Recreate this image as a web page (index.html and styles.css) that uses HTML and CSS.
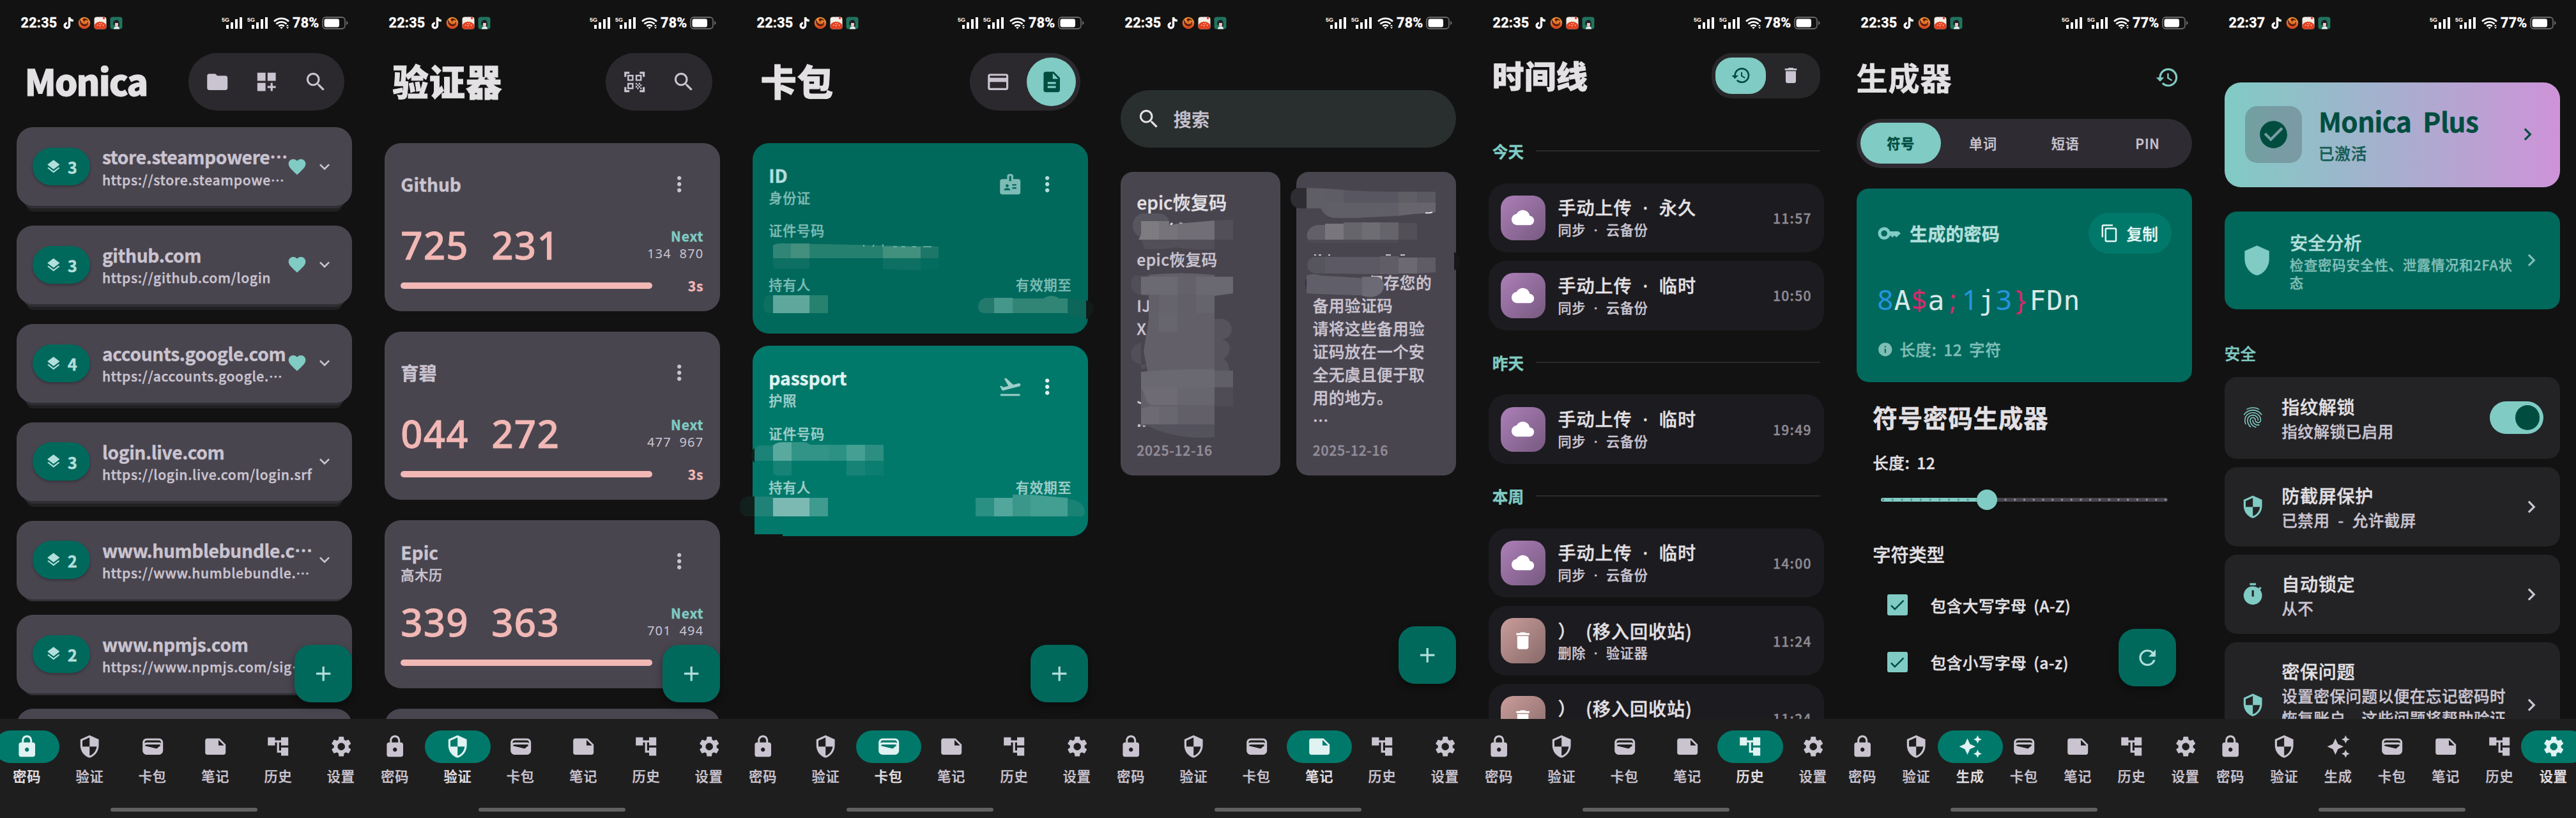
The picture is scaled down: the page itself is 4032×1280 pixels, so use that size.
FILE: index.html
```html
<!DOCTYPE html>
<html lang="zh-CN">
<head>
    <meta charset="UTF-8">
    <title>Monica</title>
    <link rel="stylesheet" href="styles.css">
</head>
<body>
    <svg class="sprite" width="0" height="0">
        <linearGradient id="flame" x1="0" y1="0" x2="0" y2="1"><stop offset="0" stop-color="#f5a03c"/><stop offset="1" stop-color="#c8401c"/></linearGradient>
        <symbol id="folder" viewBox="0 0 24 24"><path d="M10 4H4c-1.1 0-1.99.9-1.99 2L2 18c0 1.1.9 2 2 2h16c1.1 0 2-.9 2-2V8c0-1.1-.9-2-2-2h-8l-2-2z"/></symbol>
        <symbol id="dashboard" viewBox="0 0 24 24"><path d="M3 3h8v8H3zm10 0h8v8h-8zM3 13h8v8H3zm15 0h-2v3h-3v2h3v3h2v-3h3v-2h-3z"/></symbol>
        <symbol id="search" viewBox="0 0 24 24"><path d="M15.5 14h-.79l-.28-.27A6.471 6.471 0 0 0 16 9.5 6.5 6.5 0 1 0 9.5 16c1.61 0 3.09-.59 4.23-1.57l.27.28v.79l5 4.99L20.49 19l-4.99-5zm-6 0C7.01 14 5 11.99 5 9.5S7.01 5 9.5 5 14 7.01 14 9.5 11.99 14 9.5 14z"/></symbol>
        <symbol id="layers" viewBox="0 0 24 24"><path d="M11.99 18.54l-7.37-5.73L3 14.07l9 7 9-7-1.63-1.27-7.38 5.74zM12 16l7.36-5.73L21 9l-9-7-9 7 1.63 1.27L12 16z"/></symbol>
        <symbol id="heart" viewBox="0 0 24 24"><path d="M12 21.35l-1.45-1.32C5.4 15.36 2 12.28 2 8.5 2 5.42 4.42 3 7.5 3c1.74 0 3.41.81 4.5 2.09C13.09 3.81 14.76 3 16.5 3 19.58 3 22 5.42 22 8.5c0 3.78-3.4 6.86-8.55 11.54L12 21.35z"/></symbol>
        <symbol id="down" viewBox="0 0 24 24"><path d="M16.59 8.59L12 13.17 7.41 8.59 6 10l6 6 6-6z"/></symbol>
        <symbol id="right" viewBox="0 0 24 24"><path d="M10 6L8.59 7.41 13.17 12l-4.58 4.59L10 18l6-6z"/></symbol>
        <symbol id="add" viewBox="0 0 24 24"><path d="M19 13h-6v6h-2v-6H5v-2h6V5h2v6h6v2z"/></symbol>
        <symbol id="more" viewBox="0 0 24 24"><path d="M12 8c1.1 0 2-.9 2-2s-.9-2-2-2-2 .9-2 2 .9 2 2 2zm0 2c-1.1 0-2 .9-2 2s.9 2 2 2 2-.9 2-2-.9-2-2-2zm0 6c-1.1 0-2 .9-2 2s.9 2 2 2 2-.9 2-2-.9-2-2-2z"/></symbol>
        <symbol id="lock" viewBox="0 0 24 24"><path d="M18 8h-1V6c0-2.76-2.24-5-5-5S7 3.24 7 6v2H6c-1.1 0-2 .9-2 2v10c0 1.1.9 2 2 2h12c1.1 0 2-.9 2-2V10c0-1.1-.9-2-2-2zm-6 9c-1.1 0-2-.9-2-2s.9-2 2-2 2 .9 2 2-.9 2-2 2zm3.1-9H8.9V6c0-1.71 1.39-3.1 3.1-3.1 1.71 0 3.1 1.39 3.1 3.1v2z"/></symbol>
        <symbol id="security" viewBox="0 0 24 24"><path d="M12 1L3 5v6c0 5.55 3.84 10.74 9 12 5.16-1.26 9-6.45 9-12V5l-9-4zm0 10.99h7c-.53 4.12-3.28 7.79-7 8.94V12H5V6.3l7-3.11v8.8z"/></symbol>
        <symbol id="shield" viewBox="0 0 24 24"><path d="M12 1L3 5v6c0 5.55 3.84 10.74 9 12 5.16-1.26 9-6.45 9-12V5l-9-4z"/></symbol>
        <symbol id="wallet" viewBox="0 0 24 24"><path d="M18 4H6C3.79 4 2 5.79 2 8v8c0 2.21 1.79 4 4 4h12c2.21 0 4-1.79 4-4V8c0-2.21-1.79-4-4-4zm-1.86 9.77c-.24.2-.57.28-.88.2L4.15 11.25C4.45 10.52 5.16 10 6 10h12c.67 0 1.26.34 1.63.84l-3.49 2.93zM6 6h12c1.1 0 2 .9 2 2v.55c-.59-.34-1.27-.55-2-.55H6c-.73 0-1.41.21-2 .55V8c0-1.1.9-2 2-2z"/></symbol>
        <symbol id="note" viewBox="0 0 24 24"><path d="M22 10l-6-6H4c-1.1 0-2 .9-2 2v12.01c0 1.1.9 1.99 2 1.99l16-.01c1.1 0 2-.89 2-1.99v-8zm-7-4.5l5.5 5.5H15V5.5z"/></symbol>
        <symbol id="tree" viewBox="0 0 24 24"><path d="M22 11V3h-7v3H9V3H2v8h7V8h2v10h4v3h7v-8h-7v3h-2V8h2v3z"/></symbol>
        <symbol id="settings" viewBox="0 0 24 24"><path d="M19.14 12.94c.04-.3.06-.61.06-.94 0-.32-.02-.64-.07-.94l2.03-1.58c.18-.14.23-.41.12-.61l-1.92-3.32c-.12-.22-.37-.29-.59-.22l-2.39.96c-.5-.38-1.03-.7-1.62-.94l-.36-2.54c-.04-.24-.24-.41-.48-.41h-3.84c-.24 0-.43.17-.47.41l-.36 2.54c-.59.24-1.13.57-1.62.94l-2.39-.96c-.22-.08-.47 0-.59.22L2.74 8.87c-.12.21-.08.47.12.61l2.03 1.58c-.05.3-.09.63-.09.94s.02.64.07.94l-2.03 1.58c-.18.14-.23.41-.12.61l1.92 3.32c.12.22.37.29.59.22l2.39-.96c.5.38 1.03.7 1.62.94l.36 2.54c.05.24.24.41.48.41h3.84c.24 0 .44-.17.47-.41l.36-2.54c.59-.24 1.13-.56 1.62-.94l2.39.96c.22.08.47 0 .59-.22l1.92-3.32c.12-.22.07-.47-.12-.61l-2.01-1.58zM12 15.6c-1.98 0-3.6-1.62-3.6-3.6s1.62-3.6 3.6-3.6 3.6 1.62 3.6 3.6-1.62 3.6-3.6 3.6z"/></symbol>
        <symbol id="sparkle" viewBox="0 0 24 24"><path d="M19 9l1.25-2.75L23 5l-2.75-1.25L19 1l-1.25 2.75L15 5l2.75 1.25L19 9zm-7.5.5L9 4 6.5 9.5 1 12l5.5 2.5L9 20l2.5-5.5L17 12l-5.5-2.5zM19 15l-1.25 2.75L15 19l2.75 1.25L19 23l1.25-2.75L23 19l-2.75-1.25L19 15z"/></symbol>
        <symbol id="scan" viewBox="0 0 24 24"><path d="M9.5 6.5v3h-3v-3h3M11 5H5v6h6V5zm-1.5 9.5v3h-3v-3h3M11 13H5v6h6v-6zm6.5-6.5v3h-3v-3h3M19 5h-6v6h6V5zm-6 8h1.5v1.5H13V13zm1.5 1.5H16V16h-1.5v-1.5zM16 13h1.5v1.5H16V13zm-3 3h1.5v1.5H13V16zm1.5 1.5H16V19h-1.5v-1.5zM16 16h1.5v1.5H16V16zm1.5-1.5H19V16h-1.5v-1.5zm0 3H19V19h-1.5v-1.5zM22 7h-2V4h-3V2h5v5zm0 15v-5h-2v3h-3v2h5zM2 22h5v-2H4v-3H2v5zM2 2v5h2V4h3V2H2z"/></symbol>
        <symbol id="card" viewBox="0 0 24 24"><path d="M20 4H4c-1.11 0-1.99.89-1.99 2L2 18c0 1.11.89 2 2 2h16c1.11 0 2-.89 2-2V6c0-1.11-.89-2-2-2zm0 14H4v-6h16v6zm0-10H4V6h16v2z"/></symbol>
        <symbol id="doc" viewBox="0 0 24 24"><path d="M14 2H6c-1.1 0-1.99.9-1.99 2L4 20c0 1.1.89 2 1.99 2H18c1.1 0 2-.9 2-2V8l-6-6zm2 16H8v-2h8v2zm0-4H8v-2h8v2zm-3-5V3.5L18.5 9H13z"/></symbol>
        <symbol id="badge" viewBox="0 0 24 24"><path d="M20 7h-5V4c0-1.1-.9-2-2-2h-2c-1.1 0-2 .9-2 2v3H4c-1.1 0-2 .9-2 2v11c0 1.1.9 2 2 2h16c1.1 0 2-.9 2-2V9c0-1.1-.9-2-2-2zM9 12c.83 0 1.5.67 1.5 1.5S9.83 15 9 15s-1.5-.67-1.5-1.5S8.17 12 9 12zm3 6H6v-.75c0-1 2-1.5 3-1.5s3 .5 3 1.5V18zm1-9h-2V4h2v5zm5 7.5h-4V15h4v1.5zm0-3h-4V12h4v1.5z"/></symbol>
        <symbol id="plane" viewBox="0 0 24 24"><path d="M2.5 19h19v2h-19zm19.57-9.36c-.21-.8-1.04-1.28-1.84-1.06L14.92 10l-6.9-6.43-1.93.51 4.14 7.17-4.97 1.33-1.97-1.54-1.45.39 1.82 3.16.77 1.33 1.6-.43 5.31-1.42 4.35-1.16L21 11.49c.81-.23 1.28-1.05 1.07-1.85z"/></symbol>
        <symbol id="history" viewBox="0 0 24 24"><path d="M13 3a9 9 0 0 0-9 9H1l3.89 3.89.07.14L9 12H6c0-3.87 3.13-7 7-7s7 3.13 7 7-3.13 7-7 7c-1.93 0-3.68-.79-4.94-2.06l-1.42 1.42A8.954 8.954 0 0 0 13 21a9 9 0 0 0 0-18zm-1 5v5l4.28 2.54.72-1.21-3.5-2.08V8H12z"/></symbol>
        <symbol id="trash" viewBox="0 0 24 24"><path d="M6 19c0 1.1.9 2 2 2h8c1.1 0 2-.9 2-2V7H6v12zM19 4h-3.5l-1-1h-5l-1 1H5v2h14V4z"/></symbol>
        <symbol id="cloud" viewBox="0 0 24 24"><path d="M19.35 10.04C18.67 6.59 15.64 4 12 4 9.11 4 6.6 5.64 5.35 8.04 2.34 8.36 0 10.91 0 14c0 3.31 2.69 6 6 6h13c2.76 0 5-2.24 5-5 0-2.64-2.05-4.78-4.65-4.96z"/></symbol>
        <symbol id="key" viewBox="0 0 24 24"><path d="M21 10h-8.35C11.83 7.67 9.61 6 7 6c-3.31 0-6 2.69-6 6s2.69 6 6 6c2.61 0 4.83-1.67 5.65-4H13l2 2 2-2 2 2 4-4.04L21 10zM7 15c-1.65 0-3-1.35-3-3s1.35-3 3-3 3 1.35 3 3-1.35 3-3 3z"/></symbol>
        <symbol id="copy" viewBox="0 0 24 24"><path d="M16 1H4c-1.1 0-2 .9-2 2v14h2V3h12V1zm3 4H8c-1.1 0-2 .9-2 2v14c0 1.1.9 2 2 2h11c1.1 0 2-.9 2-2V7c0-1.1-.9-2-2-2zm0 16H8V7h11v14z"/></symbol>
        <symbol id="info" viewBox="0 0 24 24"><path d="M12 2C6.48 2 2 6.48 2 12s4.48 10 10 10 10-4.48 10-10S17.52 2 12 2zm1 15h-2v-6h2v6zm0-8h-2V7h2v2z"/></symbol>
        <symbol id="refresh" viewBox="0 0 24 24"><path d="M17.65 6.35A7.958 7.958 0 0 0 12 4a8 8 0 1 0 7.73 10h-2.08A5.99 5.99 0 0 1 12 18c-3.31 0-6-2.69-6-6s2.69-6 6-6c1.66 0 3.14.69 4.22 1.78L13 11h7V4l-2.35 2.35z"/></symbol>
        <symbol id="check" viewBox="0 0 24 24"><path d="M9 16.17L4.83 12l-1.42 1.41L9 19 21 7l-1.41-1.41z"/></symbol>
        <symbol id="check-circle" viewBox="0 0 24 24"><path d="M12 2C6.48 2 2 6.48 2 12s4.48 10 10 10 10-4.48 10-10S17.52 2 12 2zm-2 15l-5-5 1.41-1.41L10 14.17l7.59-7.59L19 8l-9 9z"/></symbol>
        <symbol id="timer" viewBox="0 0 24 24"><path d="M15 1H9v2h6V1zm4.03 6.39l1.42-1.42c-.43-.51-.9-.99-1.41-1.41l-1.42 1.42A8.962 8.962 0 0 0 12 4a9 9 0 1 0 7.03 3.39zM13 14h-2V8h2v6z"/></symbol>
        <symbol id="finger" viewBox="0 0 24 24"><path d="M17.81 4.47c-.08 0-.16-.02-.23-.06C15.66 3.42 14 3 12.01 3c-1.98 0-3.86.47-5.57 1.41-.24.13-.54.04-.68-.2-.13-.24-.04-.55.2-.68C7.82 2.52 9.86 2 12.01 2c2.13 0 3.99.47 6.03 1.52.25.13.34.43.21.67-.09.18-.26.28-.44.28zM3.5 9.72c-.1 0-.2-.03-.29-.09-.23-.16-.28-.47-.12-.7.99-1.4 2.25-2.5 3.75-3.27C9.98 4.04 14 4.03 17.15 5.65c1.5.77 2.76 1.86 3.75 3.25.16.22.11.54-.12.7-.23.16-.54.11-.7-.12-.9-1.26-2.04-2.25-3.39-2.94-2.87-1.47-6.54-1.47-9.4.01-1.36.7-2.5 1.7-3.4 2.96-.08.14-.23.21-.39.21zm6.25 12.07c-.13 0-.26-.05-.35-.15-.87-.87-1.34-1.43-2.01-2.64-.69-1.23-1.05-2.73-1.05-4.34 0-2.97 2.54-5.39 5.66-5.39s5.66 2.42 5.66 5.39c0 .28-.22.5-.5.5s-.5-.22-.5-.5c0-2.42-2.09-4.39-4.66-4.39-2.57 0-4.66 1.97-4.66 4.39 0 1.44.32 2.77.93 3.85.64 1.15 1.08 1.64 1.85 2.42.19.2.19.51 0 .71-.11.1-.24.15-.37.15zm7.17-1.85c-1.19 0-2.24-.3-3.1-.89-1.49-1.01-2.38-2.65-2.38-4.39 0-.28.22-.5.5-.5s.5.22.5.5c0 1.41.72 2.74 1.94 3.56.71.48 1.54.71 2.54.71.24 0 .64-.03 1.04-.1.27-.05.53.13.58.41.05.27-.13.53-.41.58-.57.11-1.07.12-1.21.12zM14.91 22c-.04 0-.09-.01-.13-.02-1.59-.44-2.63-1.03-3.72-2.1-1.4-1.39-2.17-3.24-2.17-5.22 0-1.62 1.38-2.94 3.08-2.94 1.7 0 3.08 1.32 3.08 2.94 0 1.07.93 1.94 2.08 1.94s2.08-.87 2.08-1.94c0-3.77-3.25-6.83-7.25-6.83-2.84 0-5.44 1.58-6.61 4.03-.39.81-.59 1.76-.59 2.8 0 .78.07 2.01.67 3.61.1.26-.03.55-.29.64-.26.1-.55-.04-.64-.29-.49-1.31-.73-2.61-.73-3.96 0-1.2.23-2.29.68-3.24 1.33-2.79 4.28-4.6 7.51-4.6 4.55 0 8.25 3.51 8.25 7.83 0 1.62-1.38 2.94-3.08 2.94s-3.08-1.32-3.08-2.94c0-1.07-.93-1.94-2.08-1.94s-2.08.87-2.08 1.94c0 1.71.66 3.31 1.87 4.51.95.94 1.86 1.46 3.27 1.85.27.07.42.35.35.61-.05.23-.26.38-.47.38z"/></symbol>
        <!-- notification icons in the status bar -->
        <symbol id="apps" viewBox="0 0 94 20">
            <path d="M10.5 1v13a3.7 3.7 0 1 1-3.7-3.7M10.5 1c.4 3.2 2.600 5 6.300 5.200" fill="none" stroke="#fff" stroke-width="3.400"/>
            <circle cx="34" cy="10" r="9.300" fill="url(#flame)"/>
            <path d="M27 4c2 4 3 8 8 8 3 0 4-2 3-4 3 1 2 7-3 7-6 0-9-5-8-11zM32 3c4-1 8 1 8 4-2-2-5-2-6 1-2-1-3-3-2-5z" fill="#5a1d10"/>
            <rect x="49.500" y=".5" width="19" height="19" rx="4" fill="#f3ece6"/>
            <path d="M49.500 15.500c0-10 19-10 19 0a4 4 0 0 1-4 4h-11a4 4 0 0 1-4-4z" fill="#e2401f"/>
            <path d="M63 .5h3v4l-1.500-1-1.500 1z" fill="#d8472c"/>
            <path d="M54 13.500h1.500M57 11h1.500M60 11h1.500M63 13.500h1.500M58 14.500h1.500" stroke="#fbe3c4" stroke-width="1.500"/>
            <rect x="74.500" y=".5" width="19" height="19" rx="4" fill="#23735f"/>
            <path d="M79 12c0-9 10-9 10-1v4h-3v-4h-4c0 3-3 3-3 1z" fill="#1b2330"/>
            <path d="M82 10h5v4l-1 1h-3l-1-1z" fill="#f0c8ac"/>
            <path d="M80 19.500c0-5 9-6 9 0z" fill="#e8ecee"/>
        </symbol>
        <symbol id="signals" viewBox="0 0 106 20">
            <g fill="#fff">
                <path d="M7 13h4v6H7zM14 9h4v10h-4zM21 4h4v15h-4zM28 1h4v18h-4z"/>
                <path d="M47 13h4v6h-4zM54 9h4v10h-4zM61 4h4v15h-4zM68 1h4v18h-4z"/>
                <text x="0" y="7.500" class="net">5G</text>
                <text x="40" y="7.500" class="net">5G</text>
            </g>
            <g fill="none" stroke="#fff" stroke-width="2.700">
                <path d="M82 7.500a16.500 16.500 0 0 1 23 0M85.500 11.500a11.500 11.500 0 0 1 16 0M89.200 15a6.500 6.500 0 0 1 8.600 0"/>
            </g>
            <path d="M90.800 16.500h5.400L93.500 19.500zM101 15l2-2.500 2 2.500zM101 16.500h4l-2 2.500z" fill="#fff"/>
        </symbol>
        <symbol id="battery" viewBox="0 0 41 20">
            <rect x="1" y="1" width="35" height="18" rx="5" fill="none" stroke="#686868" stroke-width="1.800"/>
            <path d="M38 7c3.500.8 3.500 5.200 0 6z" fill="#686868"/>
            <rect x="3.500" y="3.500" width="23.500" height="13" rx="3" fill="#fff"/>
        </symbol>
    </svg>

    <div class="screens">
        <!-- passwords -->
        <section class="screen">
            <div class="status"><span>22:35</span><svg class="apps"><use href="#apps"/></svg><svg class="signals"><use href="#signals"/></svg><span class="pct">78%</span><svg class="battery"><use href="#battery"/></svg></div>
            <header class="top">
                <h1 class="latin">Monica</h1>
                <div class="tools">
                    <span class="tool"><svg class="i"><use href="#folder"/></svg></span>
                    <span class="tool"><svg class="i"><use href="#dashboard"/></svg></span>
                    <span class="tool"><svg class="i"><use href="#search"/></svg></span>
                </div>
            </header>
            <main class="body passwords">
                <div class="entry stack3">
                    <div class="count"><svg class="i16"><use href="#layers"/></svg>3</div>
                    <div class="info"><h3>store.steampowere⋯</h3><p>https://store.steampowe⋯</p></div>
                    <svg class="i20 fav"><use href="#heart"/></svg>
                    <svg class="i20 fold"><use href="#down"/></svg>
                </div>
                <div class="entry stack3">
                    <div class="count"><svg class="i16"><use href="#layers"/></svg>3</div>
                    <div class="info"><h3>github.com</h3><p>https://github.com/login</p></div>
                    <svg class="i20 fav"><use href="#heart"/></svg>
                    <svg class="i20 fold"><use href="#down"/></svg>
                </div>
                <div class="entry stack3">
                    <div class="count"><svg class="i16"><use href="#layers"/></svg>4</div>
                    <div class="info"><h3>accounts.google.com</h3><p>https://accounts.google.⋯</p></div>
                    <svg class="i20 fav"><use href="#heart"/></svg>
                    <svg class="i20 fold"><use href="#down"/></svg>
                </div>
                <div class="entry stack3">
                    <div class="count"><svg class="i16"><use href="#layers"/></svg>3</div>
                    <div class="info"><h3>login.live.com</h3><p>https://login.live.com/login.srf</p></div>
                    <svg class="i20 fold"><use href="#down"/></svg>
                </div>
                <div class="entry stack2">
                    <div class="count"><svg class="i16"><use href="#layers"/></svg>2</div>
                    <div class="info"><h3>www.humblebundle.c⋯</h3><p>https://www.humblebundle.⋯</p></div>
                    <svg class="i20 fold"><use href="#down"/></svg>
                </div>
                <div class="entry stack2">
                    <div class="count"><svg class="i16"><use href="#layers"/></svg>2</div>
                    <div class="info"><h3>www.npmjs.com</h3><p>https://www.npmjs.com/sig⋯</p></div>
                </div>
                <div class="entry"></div>
            </main>
            <div class="fab"><svg class="i"><use href="#add"/></svg></div>
            <nav class="nav">
                <div class="tabs">
                    <div class="tab on"><span><svg class="i"><use href="#lock"/></svg></span>密码</div>
                    <div class="tab"><span><svg class="i"><use href="#security"/></svg></span>验证</div>
                    <div class="tab"><span><svg class="i"><use href="#wallet"/></svg></span>卡包</div>
                    <div class="tab"><span><svg class="i"><use href="#note"/></svg></span>笔记</div>
                    <div class="tab"><span><svg class="i"><use href="#tree"/></svg></span>历史</div>
                    <div class="tab"><span><svg class="i"><use href="#settings"/></svg></span>设置</div>
                </div>
                <div class="handle"></div>
            </nav>
        </section>

        <!-- authenticator -->
        <section class="screen">
            <div class="status"><span>22:35</span><svg class="apps"><use href="#apps"/></svg><svg class="signals"><use href="#signals"/></svg><span class="pct">78%</span><svg class="battery"><use href="#battery"/></svg></div>
            <header class="top">
                <h1>验证器</h1>
                <div class="tools">
                    <span class="tool"><svg class="i"><use href="#scan"/></svg></span>
                    <span class="tool"><svg class="i"><use href="#search"/></svg></span>
                </div>
            </header>
            <main class="body codes">
                <div class="otp">
                    <div class="otp-head"><div><h3>Github</h3></div><span class="tool"><svg class="i"><use href="#more"/></svg></span></div>
                    <div class="otp-code"><b>725 231</b><div class="next"><strong>Next</strong><span>134 870</span></div></div>
                    <div class="otp-time"><i></i><strong>3s</strong></div>
                </div>
                <div class="otp">
                    <div class="otp-head"><div><h3>育碧</h3></div><span class="tool"><svg class="i"><use href="#more"/></svg></span></div>
                    <div class="otp-code"><b>044 272</b><div class="next"><strong>Next</strong><span>477 967</span></div></div>
                    <div class="otp-time"><i></i><strong>3s</strong></div>
                </div>
                <div class="otp">
                    <div class="otp-head"><div><h3>Epic</h3><p>高木历</p></div><span class="tool"><svg class="i"><use href="#more"/></svg></span></div>
                    <div class="otp-code"><b>339 363</b><div class="next"><strong>Next</strong><span>701 494</span></div></div>
                    <div class="otp-time"><i></i></div>
                </div>
                <div class="otp"></div>
            </main>
            <div class="fab"><svg class="i"><use href="#add"/></svg></div>
            <nav class="nav">
                <div class="tabs">
                    <div class="tab"><span><svg class="i"><use href="#lock"/></svg></span>密码</div>
                    <div class="tab on"><span><svg class="i"><use href="#security"/></svg></span>验证</div>
                    <div class="tab"><span><svg class="i"><use href="#wallet"/></svg></span>卡包</div>
                    <div class="tab"><span><svg class="i"><use href="#note"/></svg></span>笔记</div>
                    <div class="tab"><span><svg class="i"><use href="#tree"/></svg></span>历史</div>
                    <div class="tab"><span><svg class="i"><use href="#settings"/></svg></span>设置</div>
                </div>
                <div class="handle"></div>
            </nav>
        </section>

        <!-- card wallet -->
        <section class="screen">
            <div class="status"><span>22:35</span><svg class="apps"><use href="#apps"/></svg><svg class="signals"><use href="#signals"/></svg><span class="pct">78%</span><svg class="battery"><use href="#battery"/></svg></div>
            <header class="top">
                <h1>卡包</h1>
                <div class="tools spaced">
                    <span class="tool"><svg class="i"><use href="#card"/></svg></span>
                    <span class="tool picked"><svg class="i"><use href="#doc"/></svg></span>
                </div>
            </header>
            <main class="body cards">
                <div class="idcard">
                    <div class="id-head"><div><h3>ID</h3><p>身份证</p></div><svg class="i kind"><use href="#badge"/></svg><span class="tool"><svg class="i"><use href="#more"/></svg></span></div>
                    <p class="number">证件号码</p>
                    <div class="id-foot"><p>持有人</p><p>有效期至</p></div>
                </div>
                <div class="idcard passport">
                    <div class="id-head"><div><h3>passport</h3><p>护照</p></div><svg class="i kind"><use href="#plane"/></svg><span class="tool"><svg class="i"><use href="#more"/></svg></span></div>
                    <p class="number">证件号码</p>
                    <div class="id-foot"><p>持有人</p><p>有效期至</p></div>
                </div>
            </main>
            <!-- mosaic strokes over the private fields -->
            <svg class="mosaic" viewBox="0 0 576 1280">
                <path d="M58 384q6-4 20-3l60 1 179 4v18H58z" fill="#25806f"/>
                <path d="M58 384q6-4 20-3h8v23H58z" fill="#318577"/><path d="M86 381h29v23H86z" fill="#43907f"/>
                <path d="M230 386h59v18h-59z" fill="#42917f"/><path d="M289 387h28v17h-28z" fill="#1d7769"/>
                <path d="M58 404h57v16H62q-4-2-4-6zM230 404h59v19l-59-2z" fill="#0e7062"/><path d="M289 404h28v18h-28z" fill="#046c5f"/>
                <path d="M200 386v-3M214 386l2-3M230 386v-4M246 386h6M259 386h6M276 386h6M293 386h13" stroke="#a5d6d0" stroke-width="1.200"/>
                <path d="M58 462H48q-5 8-5 17t7 11h8z" fill="#0c6f62"/><path d="M58 462h57v28H58z" fill="#5fa79c"/><path d="M115 462h29v28h-29z" fill="#27816f"/>
                <path d="M404 466h-14q-11 3-11 14 0 9 9 10h16z" fill="#22796c"/><path d="M404 466h29v24h-29z" fill="#45968b"/><path d="M433 467h48q13-8 25 0h13v23h-86z" fill="#318575"/>
                <path d="M519 467l29 2v30l-29-5z" fill="#0c675a"/><path d="M548 470q12 2 12 12t-12 18z" fill="#121b19"/>
                <path d="M58 697h-22q-7 2-7 8v16h29z" fill="#1b8377"/><path d="M29 701q-5 4-5 12 0 7 5 11z" fill="#11201d"/>
                <path d="M58 697q6-5 14-5h15v29H58z" fill="#5aa99f"/><path d="M87 692h22l8 4h28v25H87z" fill="#329486"/><path d="M145 696h28v25h-28z" fill="#2c9083"/><path d="M173 696h29v25h-29z" fill="#459f93"/><path d="M202 696h29v25h-29z" fill="#2b8e80"/>
                <path d="M58 721h29v23H65q-7-1-7-8zM173 721h29v23h-29z" fill="#178377"/><path d="M202 721h29v23h-29z" fill="#0c7e71"/>
                <path d="M24 777h5v62h-5z" fill="#111312"/><path d="M29 777H17Q6 780 6 793t10 15h13z" fill="#12201d"/>
                <path d="M29 777h29v31H29z" fill="#208277"/><path d="M29 808h44v29H29z" fill="#01786a"/><path d="M24 836h49v4H24z" fill="#121413"/>
                <path d="M58 779h57v29H58z" fill="#7db9b3"/><path d="M115 779h29v29h-29z" fill="#3f9a90"/>
                <path d="M375 779h29v29h-29z" fill="#2a9083"/><path d="M404 779h29v29h-29z" fill="#52a69c"/><path d="M433 774h28v34h-28z" fill="#3a978a"/><path d="M461 774l58 5v29h-58z" fill="#439f92"/><path d="M519 780q27 5 27 20 0 6-4 8h-23z" fill="#198275"/>
            </svg>
            <div class="fab"><svg class="i"><use href="#add"/></svg></div>
            <nav class="nav">
                <div class="tabs">
                    <div class="tab"><span><svg class="i"><use href="#lock"/></svg></span>密码</div>
                    <div class="tab"><span><svg class="i"><use href="#security"/></svg></span>验证</div>
                    <div class="tab on"><span><svg class="i"><use href="#wallet"/></svg></span>卡包</div>
                    <div class="tab"><span><svg class="i"><use href="#note"/></svg></span>笔记</div>
                    <div class="tab"><span><svg class="i"><use href="#tree"/></svg></span>历史</div>
                    <div class="tab"><span><svg class="i"><use href="#settings"/></svg></span>设置</div>
                </div>
                <div class="handle"></div>
            </nav>
        </section>

        <!-- notes -->
        <section class="screen">
            <div class="status"><span>22:35</span><svg class="apps"><use href="#apps"/></svg><svg class="signals"><use href="#signals"/></svg><span class="pct">78%</span><svg class="battery"><use href="#battery"/></svg></div>
            <main class="body notes">
                <div class="searchbar"><svg class="i"><use href="#search"/></svg>搜索</div>
                <div class="notegrid">
                    <div class="note">
                        <h3>epic恢复码</h3>
                        <p>epic恢复码<br><br>IJ<br>X<br><br><br>J<br>..</p>
                        <time>2025-12-16</time>
                    </div>
                    <div class="note">
                        <h3></h3>
                        <p><br><span class="indent">保存您的</span><br>备用验证码<br>请将这些备用验证码放在一个安全无虞且便于取用的地方。<br>⋯</p>
                        <time>2025-12-16</time>
                    </div>
                </div>
            </main>
            <svg class="mosaic" viewBox="0 0 576 1280">
                <path d="M104 352l3-3M118 350h5" stroke="#e6e1e5" stroke-width="3"/>
                <path d="M58 334h30q14 3 14 15v12l-44 10q-13-5-13-18t13-19z" fill="#57555d"/>
                <path d="M58 346h28v29H54l4-8z" fill="#7e7b81"/><path d="M86 346h16v7l13-3v25H86z" fill="#76737a"/><path d="M115 350l58-5v30h-58z" fill="#716e76"/><path d="M173 345l29-1v31h-29z" fill="#524f58"/>
                <path d="M58 375h29v15H64zM87 375h86v15q-35 2-60-3l-26 3z" fill="#524f59"/>
                <path d="M58 431H48q-6 6-6 14 0 12 13 16l15 3v-33z" fill="#514e58"/>
                <path d="M70 430q50-5 103 0v236H58V600l10-20-6-30 8-50z" fill="#625f69"/>
                <path d="M58 433h57v28H58z" fill="#6b6972"/><path d="M144 433h58v26l-29 4-29-2z" fill="#6a6870"/><path d="M115 433h29v28h-29z" fill="#64616b"/>
                <path d="M86 461h29v29H86zM144 461h29v29h-29z" fill="#65636c"/><path d="M86 490h29v29H86z" fill="#67656e"/>
                <path d="M173 499h14q12 4 13 16-1 14-15 16 12 3 12 16-2 12-11 14 10 4 10 20h-23z" fill="#56535d"/>
                <path d="M58 536q-16 5-16 19 0 14 24 16l-2 6h-6z" fill="#524f59"/>
                <path d="M58 582q55-5 115-4v28H58z" fill="#6a6870"/><path d="M173 580h29v26h-29z" fill="#605e67"/>
                <path d="M58 606h57v28H74q-8-3-10-15z" fill="#6e6b74"/><path d="M115 606h58v28h-58z" fill="#67656e"/><path d="M173 606h29v30h-29z" fill="#4f4c56"/>
                <path d="M58 640q8-5 28-4v28H58z" fill="#6d6a73"/><path d="M86 636h29v28H86z" fill="#68666e"/><path d="M115 636h58v28h-58z" fill="#625f69"/>
                <path d="M62 664h111v20q-60 5-105-18z" fill="#54525c"/>
                <path d="M317 294h-14q-11 3-11 16t13 16h12z" fill="#2e2d32"/>
                <path d="M317 294l29 1v31h-29z" fill="#605e65"/><path d="M346 295l29 2v44h-14q-15-1-22-15h7z" fill="#5e5c64"/><path d="M375 297q30 3 86 3v38q-50 2-86 3z" fill="#585660"/>
                <path d="M461 300h29v34l-29 4z" fill="#605e65"/><path d="M490 300h29v32l-29 3z" fill="#5a5860"/><path d="M346 317h115v20q-60 5-100 4-14-3-15-24z" fill="#605e66"/><path d="M461 317h58v15l-58 5z" fill="#67656b"/>
                <path d="M503 333q6 1 11-1" stroke="#e6e1e5" stroke-width="2" fill="none"/>
                <path d="M346 352q-20-2-26 8-5 10 0 15h26z" fill="#635f67"/><path d="M346 350h29v25h-29z" fill="#79767d"/><path d="M375 348h29v27h-29z" fill="#66656b"/><path d="M404 348h28v27h-28z" fill="#6f6d74"/><path d="M432 348h29v27h-29z" fill="#65646a"/><path d="M461 349h29v26h-29z" fill="#534f56"/>
                <path d="M318 375h143v5H330q-10 1-12-5z" fill="#4f4b55"/>
                <path d="M329 399h3M336 399h4M351 399h3M441 399h8M464 399h7" stroke="#cac4d0" stroke-width="2"/>
                <path d="M346 402h-18q-10 3-10 13t12 13h16z" fill="#56545d"/><path d="M346 402h86v27l-86-1z" fill="#5c5964"/><path d="M432 401h29v28h-29z" fill="#605d67"/><path d="M461 403h29v25h-29z" fill="#6c6972"/><path d="M490 403h29v23l-29 2z" fill="#5f5c66"/>
                <path d="M317 434q-4 8 0 18z" fill="#303036"/><path d="M317 431q12-4 22 0l65 4v27q-35 0-87-3z" fill="#605e69"/><path d="M404 433h24q10 3 10 15-2 16-22 17l-12-2z" fill="#6c6a74"/>
                <path d="M548 394q9 5 9 16t-9 13z" fill="#17171a"/>
            </svg>
            <div class="fab raised"><svg class="i"><use href="#add"/></svg></div>
            <nav class="nav">
                <div class="tabs">
                    <div class="tab"><span><svg class="i"><use href="#lock"/></svg></span>密码</div>
                    <div class="tab"><span><svg class="i"><use href="#security"/></svg></span>验证</div>
                    <div class="tab"><span><svg class="i"><use href="#wallet"/></svg></span>卡包</div>
                    <div class="tab on"><span><svg class="i"><use href="#note"/></svg></span>笔记</div>
                    <div class="tab"><span><svg class="i"><use href="#tree"/></svg></span>历史</div>
                    <div class="tab"><span><svg class="i"><use href="#settings"/></svg></span>设置</div>
                </div>
                <div class="handle"></div>
            </nav>
        </section>

        <!-- timeline -->
        <section class="screen">
            <div class="status"><span>22:35</span><svg class="apps"><use href="#apps"/></svg><svg class="signals"><use href="#signals"/></svg><span class="pct">78%</span><svg class="battery"><use href="#battery"/></svg></div>
            <header class="top timeline-top">
                <h1>时间线</h1>
                <div class="switcher"><span class="picked"><svg class="i20"><use href="#history"/></svg></span><span><svg class="i20"><use href="#trash"/></svg></span></div>
            </header>
            <main class="body timeline">
                <h4>今天</h4>
                <div class="event"><div class="tile"><svg><use href="#cloud"/></svg></div><div class="info"><h3>手动上传<s>·</s>永久</h3><p>同步<s>·</s>云备份</p></div><time>11:57</time></div>
                <div class="event"><div class="tile"><svg><use href="#cloud"/></svg></div><div class="info"><h3>手动上传<s>·</s>临时</h3><p>同步<s>·</s>云备份</p></div><time>10:50</time></div>
                <h4>昨天</h4>
                <div class="event"><div class="tile"><svg><use href="#cloud"/></svg></div><div class="info"><h3>手动上传<s>·</s>临时</h3><p>同步<s>·</s>云备份</p></div><time>19:49</time></div>
                <h4>本周</h4>
                <div class="event"><div class="tile"><svg><use href="#cloud"/></svg></div><div class="info"><h3>手动上传<s>·</s>临时</h3><p>同步<s>·</s>云备份</p></div><time>14:00</time></div>
                <div class="event"><div class="tile removed"><svg><use href="#trash"/></svg></div><div class="info"><h3>）&nbsp; (移入回收站)</h3><p>删除<s>·</s>验证器</p></div><time>11:24</time></div>
                <div class="event"><div class="tile removed"><svg><use href="#trash"/></svg></div><div class="info"><h3>）&nbsp; (移入回收站)</h3><p>删除<s>·</s>验证器</p></div><time>11:24</time></div>
            </main>
            <nav class="nav">
                <div class="tabs">
                    <div class="tab"><span><svg class="i"><use href="#lock"/></svg></span>密码</div>
                    <div class="tab"><span><svg class="i"><use href="#security"/></svg></span>验证</div>
                    <div class="tab"><span><svg class="i"><use href="#wallet"/></svg></span>卡包</div>
                    <div class="tab"><span><svg class="i"><use href="#note"/></svg></span>笔记</div>
                    <div class="tab on"><span><svg class="i"><use href="#tree"/></svg></span>历史</div>
                    <div class="tab"><span><svg class="i"><use href="#settings"/></svg></span>设置</div>
                </div>
                <div class="handle"></div>
            </nav>
        </section>

        <!-- generator -->
        <section class="screen">
            <div class="status"><span>22:35</span><svg class="apps"><use href="#apps"/></svg><svg class="signals"><use href="#signals"/></svg><span class="pct">77%</span><svg class="battery"><use href="#battery"/></svg></div>
            <header class="top generator-top">
                <h1>生成器</h1>
                <span class="tool"><svg class="i"><use href="#history"/></svg></span>
            </header>
            <main class="body generator">
                <div class="segments"><span class="picked">符号</span><span>单词</span><span>短语</span><span>PIN</span></div>
                <div class="result">
                    <div class="result-head"><svg class="i"><use href="#key"/></svg><h3>生成的密码</h3><div class="copy"><svg><use href="#copy"/></svg>复制</div></div>
                    <div class="secret"><span class="num">8</span><span>A</span><span class="sym">$</span><span>a</span><span class="sym">;</span><span class="num">1</span><span>j</span><span class="num">3</span><span class="sym">}</span><span>F</span><span>D</span><span>n</span></div>
                    <div class="length"><svg class="i16"><use href="#info"/></svg>长度: 12 字符</div>
                </div>
                <h2>符号密码生成器</h2>
                <p class="label">长度: 12</p>
                <div class="slider"><div class="filled"></div><div class="thumb"></div></div>
                <h3 class="types">字符类型</h3>
                <div class="option"><span><svg><use href="#check"/></svg></span>包含大写字母 (A-Z)</div>
                <div class="option"><span><svg><use href="#check"/></svg></span>包含小写字母 (a-z)</div>
            </main>
            <div class="fab regen"><svg class="i"><use href="#refresh"/></svg></div>
            <nav class="nav">
                <div class="tabs">
                    <div class="tab"><span><svg class="i"><use href="#lock"/></svg></span>密码</div>
                    <div class="tab"><span><svg class="i"><use href="#security"/></svg></span>验证</div>
                    <div class="tab on"><span><svg class="i"><use href="#sparkle"/></svg></span>生成</div>
                    <div class="tab"><span><svg class="i"><use href="#wallet"/></svg></span>卡包</div>
                    <div class="tab"><span><svg class="i"><use href="#note"/></svg></span>笔记</div>
                    <div class="tab"><span><svg class="i"><use href="#tree"/></svg></span>历史</div>
                    <div class="tab"><span><svg class="i"><use href="#settings"/></svg></span>设置</div>
                </div>
                <div class="handle"></div>
            </nav>
        </section>

        <!-- settings -->
        <section class="screen">
            <div class="status"><span>22:37</span><svg class="apps"><use href="#apps"/></svg><svg class="signals"><use href="#signals"/></svg><span class="pct">77%</span><svg class="battery"><use href="#battery"/></svg></div>
            <main class="body prefs">
                <div class="plus">
                    <div class="plus-icon"><svg class="i32"><use href="#check-circle"/></svg></div>
                    <div class="info"><h2>Monica Plus</h2><p>已激活</p></div>
                    <svg class="i"><use href="#right"/></svg>
                </div>
                <div class="analysis">
                    <svg class="i32"><use href="#shield"/></svg>
                    <div class="info"><h3>安全分析</h3><p>检查密码安全性、泄露情况和2FA状态</p></div>
                    <svg class="i"><use href="#right"/></svg>
                </div>
                <h4>安全</h4>
                <div class="pref tall"><svg class="i lead"><use href="#finger"/></svg><div class="info"><h3>指纹解锁</h3><p>指纹解锁已启用</p></div><div class="toggle"><i></i></div></div>
                <div class="pref"><svg class="i lead"><use href="#security"/></svg><div class="info"><h3>防截屏保护</h3><p>已禁用 - 允许截屏</p></div><svg class="i"><use href="#right"/></svg></div>
                <div class="pref"><svg class="i lead"><use href="#timer"/></svg><div class="info"><h3>自动锁定</h3><p>从不</p></div><svg class="i"><use href="#right"/></svg></div>
                <div class="pref"><svg class="i lead"><use href="#security"/></svg><div class="info"><h3>密保问题</h3><p>设置密保问题以便在忘记密码时恢复账户。这些问题将帮助验证您的身份</p></div><svg class="i"><use href="#right"/></svg></div>
            </main>
            <nav class="nav">
                <div class="tabs">
                    <div class="tab"><span><svg class="i"><use href="#lock"/></svg></span>密码</div>
                    <div class="tab"><span><svg class="i"><use href="#security"/></svg></span>验证</div>
                    <div class="tab"><span><svg class="i"><use href="#sparkle"/></svg></span>生成</div>
                    <div class="tab"><span><svg class="i"><use href="#wallet"/></svg></span>卡包</div>
                    <div class="tab"><span><svg class="i"><use href="#note"/></svg></span>笔记</div>
                    <div class="tab"><span><svg class="i"><use href="#tree"/></svg></span>历史</div>
                    <div class="tab on"><span><svg class="i"><use href="#settings"/></svg></span>设置</div>
                </div>
                <div class="handle"></div>
            </nav>
        </section>
    </div>
</body>
</html>
```

FILE: styles.css
```css
* {
    box-sizing: border-box;
    margin: 0;
    padding: 0;
}

body {
    background: #121212;
    color: #e3e0e4;
    font-family: "Noto Sans CJK SC", sans-serif;
    font-weight: 500;
    -webkit-text-stroke: 0.4px;
}

svg {
    display: block;
    flex: none;
    fill: currentColor;
}

.sprite {
    position: absolute;
}

.i { width: 38.4px; height: 38.4px; }
.i16 { width: 25.6px; height: 25.6px; }
.i20 { width: 32px; height: 32px; }
.i32 { width: 51.2px; height: 51.2px; }

.screens {
    display: flex;
    width: 4032px;
    height: 1280px;
    overflow: hidden;
}

.screen {
    position: relative;
    display: flex;
    flex-direction: column;
    width: 576px;
    height: 1280px;
    overflow: hidden;
}

/* status bar */
.status {
    display: flex;
    flex: none;
    align-items: center;
    height: 83px;
    padding: 0 31px 11px 32.5px;
    color: #fff;
    font: 700 21.5px/1 Roboto, sans-serif;
}

.status span { letter-spacing: 0.3px; }
.apps { width: 94px; height: 20px; margin-left: 8.5px; }
.signals { width: 106px; height: 20px; margin-left: auto; }
.net { font: 700 9px "Liberation Sans", sans-serif; }
.pct { margin: 0 4.5px 0 5.5px; }
.battery { width: 41px; height: 20px; }

/* header */
.top {
    display: flex;
    flex: none;
    align-items: center;
    justify-content: space-between;
    height: 90px;
    padding: 0 37.5px 0 38.4px;
}

h1 {
    color: #e3e1e3;
    font-size: 56.3px;
    font-weight: 900;
    line-height: 86px;
    height: 90px;
    letter-spacing: 1px;
    -webkit-text-stroke: 0.9px;
}

h1.latin { letter-spacing: -2px; }

.tools {
    display: flex;
    padding: 6.4px;
    border-radius: 45px;
    background: #2b292e;
    color: #cac4d0;
}

.tools.spaced { gap: 6.4px; }

.tool {
    display: flex;
    flex: none;
    align-items: center;
    justify-content: center;
    width: 76.8px;
    height: 76.8px;
    border-radius: 50%;
}

.picked {
    background: #80cbc4;
    color: #004d40;
}

.body {
    flex: 1;
    min-height: 0;
    overflow: hidden;
    padding: 0 25px 0 25.7px;
}

.info {
    flex: 1;
    min-width: 0;
}

h3 {
    font-size: 28.16px;
    font-weight: 700;
    line-height: 42.2px;
    white-space: nowrap;
}

p {
    font-size: 21.12px;
    line-height: 28.2px;
    letter-spacing: 0.8px;
}

/* passwords */
.passwords { padding-top: 26px; }

.entry {
    display: flex;
    align-items: center;
    height: 123.2px;
    padding: 0 26.6px 0 25px;
    border-radius: 25.6px;
    background: #49454f;
    color: #cac4d0;
}

.stack3 {
    margin-bottom: 30.7px;
    box-shadow: 0 14px 0 -10px #302f35, 0 25px 0 -16px #212123;
}

.stack2 {
    margin-bottom: 24px;
    box-shadow: 0 13px 0 -10px #302f35;
}

.entry .info { padding-bottom: 2px; }
.entry h3 { letter-spacing: -0.35px; }
.entry p { white-space: nowrap; letter-spacing: 0.62px; }

.count {
    display: flex;
    align-items: center;
    justify-content: center;
    gap: 9.6px;
    width: 90px;
    height: 59.5px;
    margin-right: 19.2px;
    border-radius: 30px;
    background: #00695c;
    box-shadow: 0 2px 4px rgba(0, 0, 0, .3);
    color: #b2dfdb;
    font-size: 25.6px;
    font-weight: 700;
}

.fav { color: #80cbc4; margin-right: 11.5px; }

/* authenticator */
.codes { padding-top: 51px; }

.otp {
    height: 262.6px;
    margin-bottom: 32.4px;
    padding: 25.6px;
    border-radius: 25.6px;
    background: #49454f;
    color: #cac4d0;
}

.otp-head, .id-head {
    display: flex;
    align-items: center;
    justify-content: space-between;
    height: 76.8px;
}

.otp-code {
    display: flex;
    align-items: center;
    justify-content: space-between;
    height: 106.5px;
    padding-top: 7px;
    font-family: "Noto Sans", sans-serif;
}

.otp-code b {
    color: #f2b8b5;
    font-size: 60px;
    font-weight: 500;
    line-height: 70px;
    letter-spacing: 1.2px;
    word-spacing: 18.7px;
    -webkit-text-stroke: 0.8px;
}

.next {
    display: flex;
    flex-direction: column;
    align-items: flex-end;
    line-height: 27px;
}

.next strong {
    color: #80cbc4;
    font-family: "Noto Sans CJK SC", sans-serif;
    font-size: 21.12px;
    letter-spacing: 0.9px;
}

.next span {
    font-size: 20px;
    font-weight: 400;
    letter-spacing: 1.2px;
    word-spacing: 6.2px;
    -webkit-text-stroke: 0;
}

.otp-time {
    display: flex;
    align-items: center;
    justify-content: space-between;
    height: 28px;
}

.otp-time i {
    width: 394px;
    height: 9.6px;
    border-radius: 5px;
    background: #f2b8b5;
}

.otp-time strong {
    color: #f2b8b5;
    font-size: 21.12px;
    letter-spacing: 0.9px;
}

/* id cards */
.cards { padding-top: 51px; }

.idcard {
    height: 298px;
    margin-bottom: 19.2px;
    padding: 25.6px;
    border-radius: 25.6px;
    background: #00695c;
    color: #b2dfdb;
}

.passport {
    background: #00796b;
    color: #e0f2f1;
}

.id-head > div { flex: 1; }
.id-head .kind { opacity: .7; }
.idcard p { opacity: .7; }
.number { margin-top: 20px; }

.id-foot {
    display: flex;
    justify-content: space-between;
    margin-top: 56.5px;
}

.mosaic {
    position: absolute;
    top: 0;
    left: 0;
    width: 576px;
    height: 1280px;
}

/* notes */
.notes { padding-top: 58px; }

.searchbar {
    display: flex;
    align-items: center;
    gap: 19.2px;
    height: 89.6px;
    padding-left: 25.6px;
    border-radius: 45px;
    background: #282f2e;
    color: #cac4d0;
    font-size: 28.16px;
}

.searchbar svg { color: #e3e0e4; }

.notegrid {
    display: grid;
    grid-template-columns: 1fr 1fr;
    gap: 25.6px;
    margin-top: 38.5px;
}

.note {
    height: 475.4px;
    padding: 25.6px;
    border-radius: 19.2px;
    background: #49454f;
}

.note h3 {
    height: 92px;
    font-weight: 500;
}

.note p {
    height: 289px;
    color: #cac4d0;
    font-size: 24.64px;
    line-height: 36.1px;
    letter-spacing: 0.44px;
}

.indent { margin-left: 86px; }

.note time {
    display: block;
    margin-top: 14px;
    color: #928d99;
    font-size: 21.12px;
    line-height: 28.2px;
    letter-spacing: 0.7px;
}

/* timeline */
.timeline-top {
    height: 71px;
    padding: 0 31px 0 32px;
}

.timeline-top h1, .generator-top h1 {
    height: 70px;
    font-size: 49.3px;
    line-height: 66px;
    letter-spacing: 0.6px;
}

.generator-top h1 {
    font-weight: 700;
    -webkit-text-stroke: 0.5px;
}

.switcher {
    display: flex;
    width: 170px;
    height: 70.4px;
    padding: 6.4px;
    border-radius: 32px;
    background: #272729;
    color: #cac4d0;
}

.switcher span {
    display: flex;
    flex: 1;
    align-items: center;
    justify-content: center;
    border-radius: 25.6px;
}

.timeline { padding-top: 32px; }

.timeline h4 {
    display: flex;
    align-items: center;
    gap: 18px;
    height: 100.5px;
    padding: 0 6px;
    color: #80cbc4;
    font-size: 24.64px;
    letter-spacing: 0.3px;
}

.timeline h4::after {
    content: "";
    flex: 1;
    height: 2px;
    background: #2b2b2d;
}

.event {
    display: flex;
    align-items: center;
    height: 108.8px;
    padding: 0 19.2px;
    border-radius: 28px;
    background: #1c1b1f;
}

.event + .event { margin-top: 12.8px; }

.tile {
    display: flex;
    align-items: center;
    justify-content: center;
    width: 70.4px;
    height: 70.4px;
    margin-right: 19.2px;
    border-radius: 20px;
    background: linear-gradient(135deg, #ac7fb8, #775a80);
    color: #fff;
}

.tile.removed { background: linear-gradient(135deg, #ca9d9b, #876a69); }
.tile svg { width: 35.2px; height: 35.2px; }

.event .info { padding-bottom: 3px; }

.event h3 {
    font-weight: 500;
    line-height: 40px;
    letter-spacing: 0.88px;
}

.event p { color: #cac4d0; }

.event s {
    display: inline-block;
    width: 1.5em;
    font-family: "Noto Sans", sans-serif;
    text-align: center;
    text-decoration: none;
}

.event time {
    color: #8e8a93;
    font-size: 21.12px;
    letter-spacing: 1.3px;
}

/* generator */
.generator-top {
    height: 77px;
    padding: 0 25.6px;
}

.generator-top .tool { color: #80cbc4; }
.generator { padding-top: 26px; }

.segments {
    display: flex;
    gap: 2.5px;
    height: 76.5px;
    padding: 6.4px;
    border-radius: 38.4px;
    background: #2e2b32;
    color: #cac4d0;
    font-size: 21.12px;
    letter-spacing: 0.9px;
}

.segments span {
    display: flex;
    flex: 1;
    align-items: center;
    justify-content: center;
    border-radius: 32px;
}

.segments .picked { font-weight: 700; }

.result {
    height: 302.5px;
    margin-top: 32.5px;
    padding: 38.4px 32px;
    border-radius: 19.2px;
    background: #00695c;
    color: #b2dfdb;
}

.result-head {
    display: flex;
    align-items: center;
    height: 64px;
}

.result-head > svg { color: #80cbc4; }

.result-head h3 {
    flex: 1;
    margin-left: 13px;
}

.copy {
    display: flex;
    align-items: center;
    gap: 12px;
    width: 130.5px;
    height: 64px;
    padding-left: 18px;
    border-radius: 32px;
    background: #00796b;
    color: #e8f8f6;
    font-size: 24.64px;
}

.copy svg { width: 30px; height: 30px; }

.secret {
    display: flex;
    align-items: baseline;
    height: 60px;
    margin-top: 41px;
    color: #d9e9e7;
    font: 400 43px/60px "DejaVu Sans Mono", monospace;
    -webkit-text-stroke: 0;
}

.secret span {
    width: 26.5px;
    text-align: center;
}

/* digits and symbols use the plain sans face */
.secret .num, .secret .sym {
    display: flex;
    justify-content: center;
    font-family: "Noto Sans", sans-serif;
    font-size: 43.5px;
}

.secret .num { color: #2494e0; }
.secret .sym { color: #d8286a; }

.length {
    display: flex;
    align-items: center;
    gap: 10px;
    margin-top: 24px;
    color: #7fbdb5;
    font-size: 24.64px;
    line-height: 48px;
    letter-spacing: 0.44px;
    word-spacing: 5px;
}

.generator h2 {
    margin: 26px 0 0 25.6px;
    font-size: 38.7px;
    font-weight: 700;
    line-height: 56px;
    letter-spacing: 0.6px;
}

.label {
    margin: 23px 0 0 25.6px;
    font-size: 24.64px;
    line-height: 40px;
    letter-spacing: 0.44px;
    word-spacing: 5px;
}

.slider {
    display: flex;
    align-items: center;
    width: 449px;
    height: 6px;
    margin: 36px 0 0 38.4px;
    border-radius: 3px;
    background: radial-gradient(circle at 3.5px 3px, #938f99 1.4px, transparent 2px) 0 0 / 14.74px 6px, #49454f;
}

.filled {
    width: 150px;
    height: 6px;
    border-radius: 3px 0 0 3px;
    background: radial-gradient(circle at 3.5px 3px, #4f948d 1.4px, transparent 2px) 0 0 / 14.74px 6px, #80cbc4;
}

.thumb {
    width: 32px;
    height: 32px;
    border-radius: 50%;
    background: #80cbc4;
}

.types {
    margin: 61px 0 14px 25.6px;
    font-weight: 500;
}

.option {
    display: flex;
    align-items: center;
    height: 89.6px;
    padding-left: 48px;
    font-size: 24.64px;
    letter-spacing: 0.44px;
    word-spacing: 5px;
}

.option span {
    display: flex;
    align-items: center;
    justify-content: center;
    width: 32.5px;
    height: 32.5px;
    margin-right: 35.5px;
    border-radius: 3px;
    background: #80cbc4;
    color: #004d40;
}

.option span svg { width: 29px; height: 29px; }

/* settings */
.prefs { padding-top: 45.6px; }

.plus {
    display: flex;
    align-items: center;
    height: 164px;
    padding: 0 32px;
    border-radius: 25.6px;
    background: linear-gradient(90deg, #80cbc4, #ce93d8);
    color: #004d40;
}

.plus-icon {
    display: flex;
    align-items: center;
    justify-content: center;
    width: 89.6px;
    height: 89.6px;
    margin-right: 25.6px;
    border-radius: 19.2px;
    background: rgba(73, 69, 79, .3);
}

.plus h2 {
    margin-bottom: 7px;
    font-size: 42.24px;
    line-height: 52px;
    letter-spacing: -0.6px;
    word-spacing: 9px;
}

.plus p {
    font-size: 24.64px;
    line-height: 35.2px;
    opacity: .85;
}

.analysis {
    display: flex;
    align-items: center;
    height: 152.7px;
    margin-top: 38.4px;
    padding: 0 25.6px;
    border-radius: 19.2px;
    background: #00695c;
    color: #b2dfdb;
}

.analysis .i32 { margin-right: 25.6px; color: #80cbc4; }
.analysis .i, .analysis p { opacity: .72; }
.analysis h3 { font-weight: 500; }
.analysis p { line-height: 28.5px; letter-spacing: 1px; }

.prefs h4 {
    height: 106px;
    color: #80cbc4;
    font-size: 24.64px;
    font-weight: 500;
    line-height: 136px;
    letter-spacing: 0.3px;
}

.pref {
    display: flex;
    align-items: center;
    margin-bottom: 13px;
    padding: 23.5px 25.6px;
    border-radius: 19.2px;
    background: #232325;
}

.pref.tall { height: 128px; }

.pref .i { color: #cac4d0; }
.pref .lead { margin-right: 25.6px; color: #80cbc4; }

.pref h3 {
    font-weight: 500;
    letter-spacing: 0.6px;
}

.pref p {
    padding-right: 12px;
    color: #cac4d0;
    font-size: 24.64px;
    line-height: 35.2px;
    letter-spacing: 0.44px;
    word-spacing: 7px;
}

.toggle {
    display: flex;
    align-items: center;
    justify-content: flex-end;
    width: 84px;
    height: 51.2px;
    padding-right: 6.4px;
    border-radius: 26px;
    background: #80cbc4;
}

.toggle i {
    width: 38.4px;
    height: 38.4px;
    border-radius: 50%;
    background: #004d40;
}

/* floating button */
.fab {
    position: absolute;
    right: 25px;
    bottom: 181px;
    display: flex;
    align-items: center;
    justify-content: center;
    width: 89.6px;
    height: 89.6px;
    border-radius: 25.6px;
    background: #00695c;
    box-shadow: 0 5px 12px rgba(0, 0, 0, .4);
    color: #b2dfdb;
}

.fab.raised { bottom: 210px; }
.fab.regen { right: 50px; bottom: 206.5px; }

/* bottom navigation */
.nav {
    position: relative;
    flex: none;
    height: 155px;
    padding-top: 18px;
    background: #1e1e1e;
}

.tabs {
    display: flex;
    margin: 0 -7px;
}

.tab {
    display: flex;
    flex: 1 1 0;
    min-width: 0;
    flex-direction: column;
    align-items: center;
    color: #cac4d0;
    font-size: 21.12px;
    line-height: 28px;
    letter-spacing: 0.88px;
}

.tab span {
    display: flex;
    flex: none;
    align-items: center;
    justify-content: center;
    width: 102.4px;
    height: 51.2px;
    margin-bottom: 6px;
    border-radius: 26px;
}

.tab.on { color: #e6e1e5; }

.tab.on span {
    background: #00796b;
    color: #e0f2f1;
}

.handle {
    width: 230.4px;
    height: 6.4px;
    margin: 35.5px auto 0;
    border-radius: 4px;
    background: #616161;
}
```
